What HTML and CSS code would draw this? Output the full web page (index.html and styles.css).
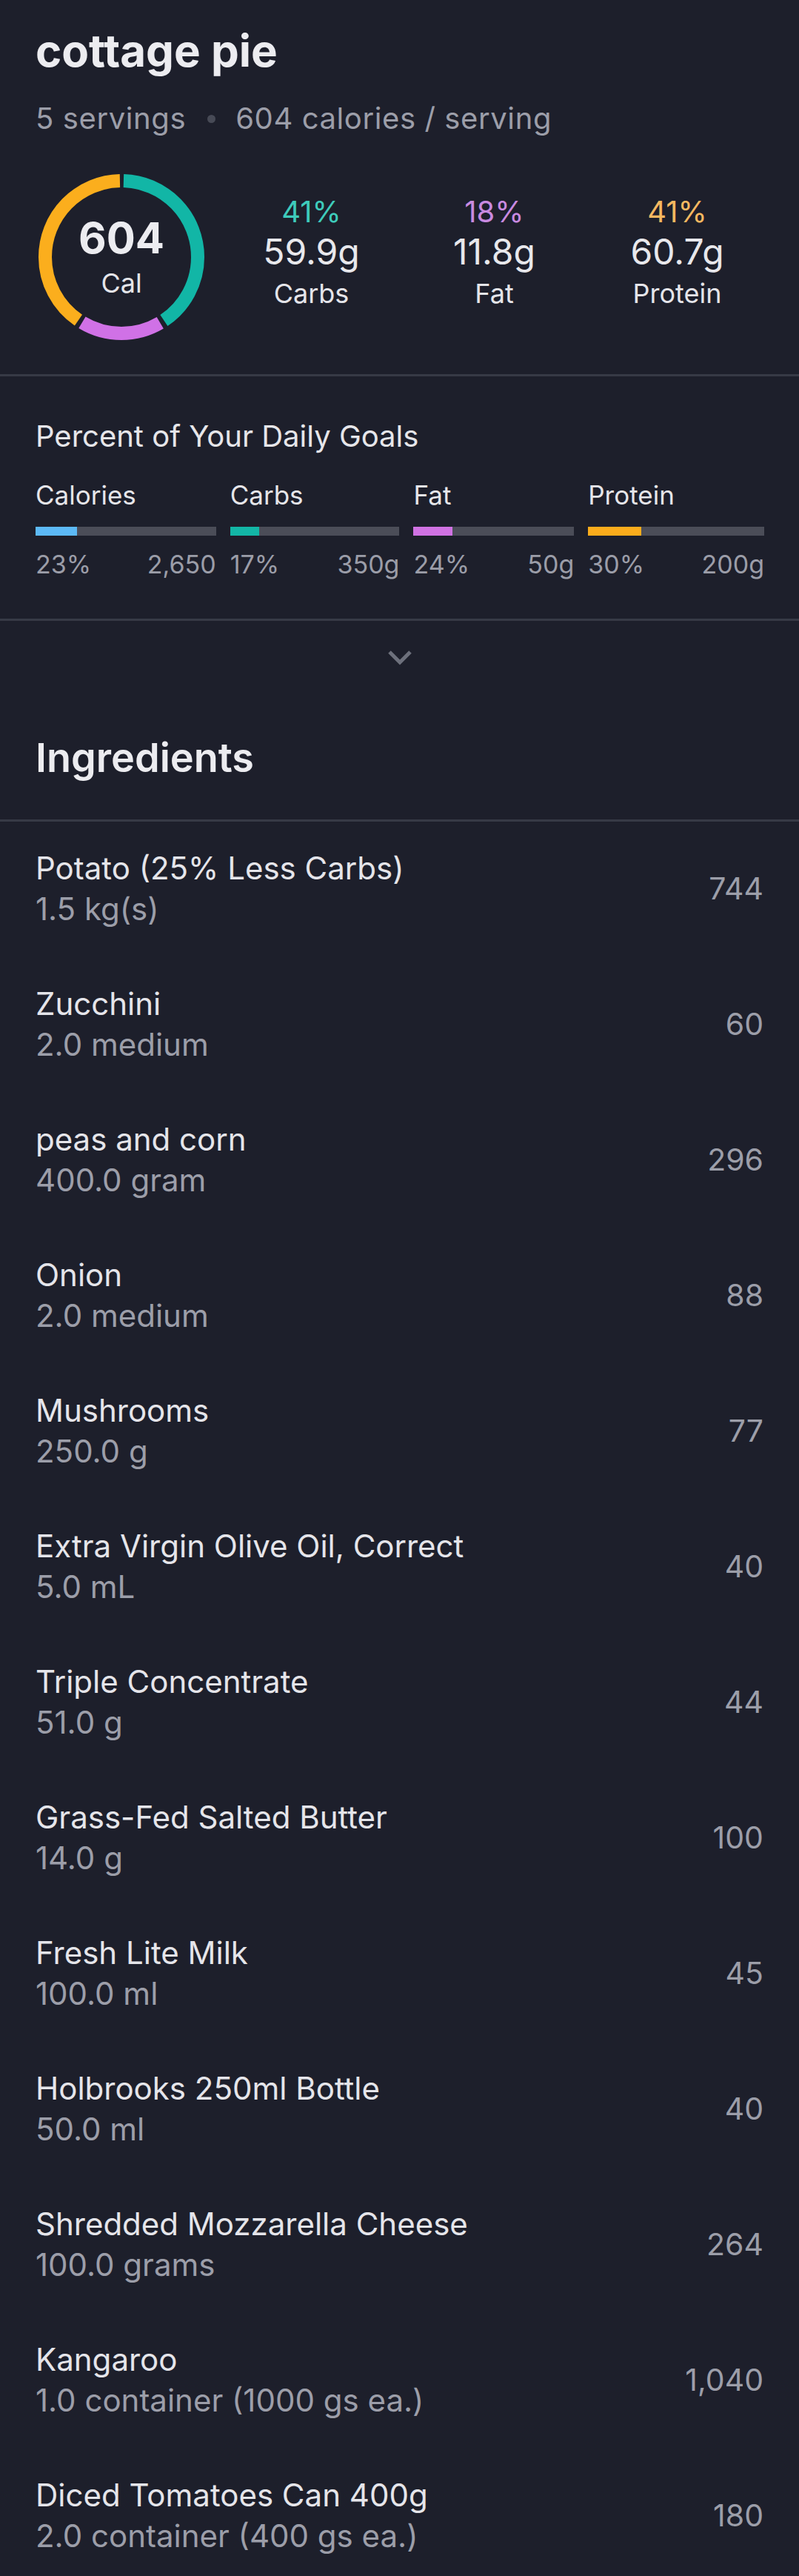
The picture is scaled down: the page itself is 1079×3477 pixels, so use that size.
FILE: index.html
```html
<!DOCTYPE html>
<html lang="en">
<head>
  <meta charset="UTF-8" />
  <meta name="viewport" content="width=device-width, initial-scale=1.0"/>
  <title>cottage pie</title>
  <link rel="stylesheet" href="styles.css">
</head>
<body>

  <div class="summary">
    <h1 class="recipe-title">cottage pie</h1>
    <div class="recipe-meta">
      <span>5 servings</span>
      <span class="dot"></span>
      <span>604 calories / serving</span>
    </div>

    <div class="macros">
      <div class="ring">
        <svg class="ring-chart" width="232" height="232" viewBox="0 0 232 232">
          <g transform="rotate(-90 116 116)" fill="none" stroke-width="18">
            <circle cx="116" cy="116" r="103" stroke="#12b6a6" stroke-dasharray="259.4 647.2" stroke-dashoffset="-3"/>
            <circle cx="116" cy="116" r="103" stroke="#d071e6" stroke-dasharray="110.5 647.2" stroke-dashoffset="-268.4"/>
            <circle cx="116" cy="116" r="103" stroke="#fbae1d" stroke-dasharray="259.4 647.2" stroke-dashoffset="-384.8"/>
          </g>
        </svg>
        <div class="ring-text">
          <div class="ring-num">604</div>
          <div class="ring-unit">Cal</div>
        </div>
      </div>

      <div class="macro-cols">
        <div class="macro">
          <div class="macro-pct carbs">41%</div>
          <div class="macro-val">59.9g</div>
          <div class="macro-name">Carbs</div>
        </div>
        <div class="macro">
          <div class="macro-pct fat">18%</div>
          <div class="macro-val">11.8g</div>
          <div class="macro-name">Fat</div>
        </div>
        <div class="macro">
          <div class="macro-pct protein">41%</div>
          <div class="macro-val">60.7g</div>
          <div class="macro-name">Protein</div>
        </div>
      </div>
    </div>
  </div>

  <div class="goals">
    <h2 class="goals-title">Percent of Your Daily Goals</h2>
    <div class="goal-row">
      <div class="goal goal-cal">
        <div class="goal-label">Calories</div>
        <div class="bar"><div class="bar-fill" style="width: 23%"></div></div>
        <div class="goal-nums"><span>23%</span><span>2,650</span></div>
      </div>
      <div class="goal goal-carbs">
        <div class="goal-label">Carbs</div>
        <div class="bar"><div class="bar-fill" style="width: 17%"></div></div>
        <div class="goal-nums"><span>17%</span><span>350g</span></div>
      </div>
      <div class="goal goal-fat">
        <div class="goal-label">Fat</div>
        <div class="bar"><div class="bar-fill" style="width: 24%"></div></div>
        <div class="goal-nums"><span>24%</span><span>50g</span></div>
      </div>
      <div class="goal goal-protein">
        <div class="goal-label">Protein</div>
        <div class="bar"><div class="bar-fill" style="width: 30%"></div></div>
        <div class="goal-nums"><span>30%</span><span>200g</span></div>
      </div>
    </div>
  </div>

  <div class="expand">
    <svg width="36" height="22" viewBox="0 0 36 22">
      <path d="M4 3 L18 17 L32 3" fill="none" stroke="#6d707c" stroke-width="5"/>
    </svg>
  </div>

  <h2 class="ingredients-title">Ingredients</h2>

  <ul class="ingredients">
    <li class="item">
      <div class="item-info">
        <div class="item-name">Potato (25% Less Carbs)</div>
        <div class="item-amount">1.5 kg(s)</div>
      </div>
      <div class="item-cal">744</div>
    </li>
    <li class="item">
      <div class="item-info">
        <div class="item-name">Zucchini</div>
        <div class="item-amount">2.0 medium</div>
      </div>
      <div class="item-cal">60</div>
    </li>
    <li class="item">
      <div class="item-info">
        <div class="item-name">peas and corn</div>
        <div class="item-amount">400.0 gram</div>
      </div>
      <div class="item-cal">296</div>
    </li>
    <li class="item">
      <div class="item-info">
        <div class="item-name">Onion</div>
        <div class="item-amount">2.0 medium</div>
      </div>
      <div class="item-cal">88</div>
    </li>
    <li class="item">
      <div class="item-info">
        <div class="item-name">Mushrooms</div>
        <div class="item-amount">250.0 g</div>
      </div>
      <div class="item-cal">77</div>
    </li>
    <li class="item">
      <div class="item-info">
        <div class="item-name">Extra Virgin Olive Oil, Correct</div>
        <div class="item-amount">5.0 mL</div>
      </div>
      <div class="item-cal">40</div>
    </li>
    <li class="item">
      <div class="item-info">
        <div class="item-name">Triple Concentrate</div>
        <div class="item-amount">51.0 g</div>
      </div>
      <div class="item-cal">44</div>
    </li>
    <li class="item">
      <div class="item-info">
        <div class="item-name">Grass-Fed Salted Butter</div>
        <div class="item-amount">14.0 g</div>
      </div>
      <div class="item-cal">100</div>
    </li>
    <li class="item">
      <div class="item-info">
        <div class="item-name">Fresh Lite Milk</div>
        <div class="item-amount">100.0 ml</div>
      </div>
      <div class="item-cal">45</div>
    </li>
    <li class="item">
      <div class="item-info">
        <div class="item-name">Holbrooks 250ml Bottle</div>
        <div class="item-amount">50.0 ml</div>
      </div>
      <div class="item-cal">40</div>
    </li>
    <li class="item">
      <div class="item-info">
        <div class="item-name">Shredded Mozzarella Cheese</div>
        <div class="item-amount">100.0 grams</div>
      </div>
      <div class="item-cal">264</div>
    </li>
    <li class="item">
      <div class="item-info">
        <div class="item-name">Kangaroo</div>
        <div class="item-amount">1.0 container (1000 gs ea.)</div>
      </div>
      <div class="item-cal">1,040</div>
    </li>
    <li class="item">
      <div class="item-info">
        <div class="item-name">Diced Tomatoes Can 400g</div>
        <div class="item-amount">2.0 container (400 gs ea.)</div>
      </div>
      <div class="item-cal">180</div>
    </li>
  </ul>

</body>
</html>
```

FILE: styles.css
```css
body {
  margin: 0;
  padding: 0;
  font-family: 'Inter', 'Noto Sans', sans-serif;
  background: #1d1f2b;
  color: #e5e5ea;
}

h1, h2 {
  margin: 0;
}

.summary {
  padding: 36px 48px 42px;
  border-bottom: 3px solid #373a46;
}

.recipe-title {
  font-size: 60px;
  font-weight: 700;
  line-height: 64px;
  color: #ececf0;
}

.recipe-meta {
  margin-top: 38px;
  display: flex;
  align-items: center;
  font-size: 40px;
  letter-spacing: 0.6px;
  line-height: 44px;
  color: #9c9ea9;
}

.dot {
  width: 11px;
  height: 11px;
  border-radius: 50%;
  background: #474a56;
  margin: 0 27px 0 29px;
}

.macros {
  margin-top: 49px;
  display: flex;
  align-items: center;
}

.ring {
  display: grid;
  width: 232px;
  height: 232px;
}

.ring-chart, .ring-text {
  grid-area: 1 / 1;
}

.ring-text {
  align-self: center;
  text-align: center;
}

.ring-num {
  font-size: 58px;
  font-weight: 700;
  line-height: 60px;
  color: #ececf0;
}

.ring-unit {
  margin-top: 10px;
  font-size: 36px;
  line-height: 42px;
  color: #e5e5ea;
}

.macro-cols {
  display: flex;
  margin-left: 17px;
  padding-bottom: 14px;
}

.macro {
  width: 247px;
  text-align: center;
}

.macro-pct {
  font-size: 40px;
  line-height: 46px;
}

.carbs { color: #3ecbbb; }
.fat { color: #c98ae0; }
.protein { color: #f6b860; }

.macro-val {
  margin-top: 3px;
  font-size: 48px;
  line-height: 56px;
  color: #e8e8ec;
}

.macro-name {
  margin-top: 7px;
  font-size: 36px;
  line-height: 42px;
  color: #e5e5ea;
}

.goals {
  padding: 58px 47px 52px 48px;
  border-bottom: 3px solid #373a46;
}

.goals-title {
  font-size: 40px;
  font-weight: 400;
  line-height: 45px;
  color: #e6e6ea;
}

.goal-row {
  margin-top: 36px;
  display: flex;
  gap: 19px;
}

.goal-cal { width: 244px; }
.goal-carbs { width: 229px; }
.goal-fat { width: 217px; }
.goal-protein { width: 238px; }

.goal-label {
  font-size: 35px;
  line-height: 42px;
  color: #e6e6ea;
}

.bar {
  margin-top: 22px;
  height: 12px;
  background: #4b4d58;
}

.bar-fill {
  height: 100%;
}

.goal-cal .bar-fill { background: #5cb9f6; }
.goal-carbs .bar-fill { background: #13b6a6; }
.goal-fat .bar-fill { background: #d072e3; }
.goal-protein .bar-fill { background: #fbac1c; }

.goal-nums {
  margin-top: 18px;
  display: flex;
  justify-content: space-between;
  font-size: 34px;
  line-height: 42px;
  color: #9b9da8;
}

.expand {
  padding-top: 39px;
  display: flex;
  justify-content: center;
}

.expand svg {
  display: block;
}

.ingredients-title {
  padding: 92px 48px 52px;
  font-size: 54px;
  font-weight: 600;
  line-height: 63px;
  color: #ececf0;
  border-bottom: 3px solid #373a46;
}

.ingredients {
  list-style: none;
  margin: 0;
  padding: 0;
}

.item {
  display: flex;
  align-items: center;
  justify-content: space-between;
  padding: 35px 48px 38px;
}

.item-name {
  font-size: 42px;
  line-height: 55px;
  color: #e5e5ea;
}

.item-amount {
  font-size: 42px;
  line-height: 55px;
  color: #9c9ea9;
}

.item-cal {
  font-size: 41px;
  color: #9c9ea9;
}
```
